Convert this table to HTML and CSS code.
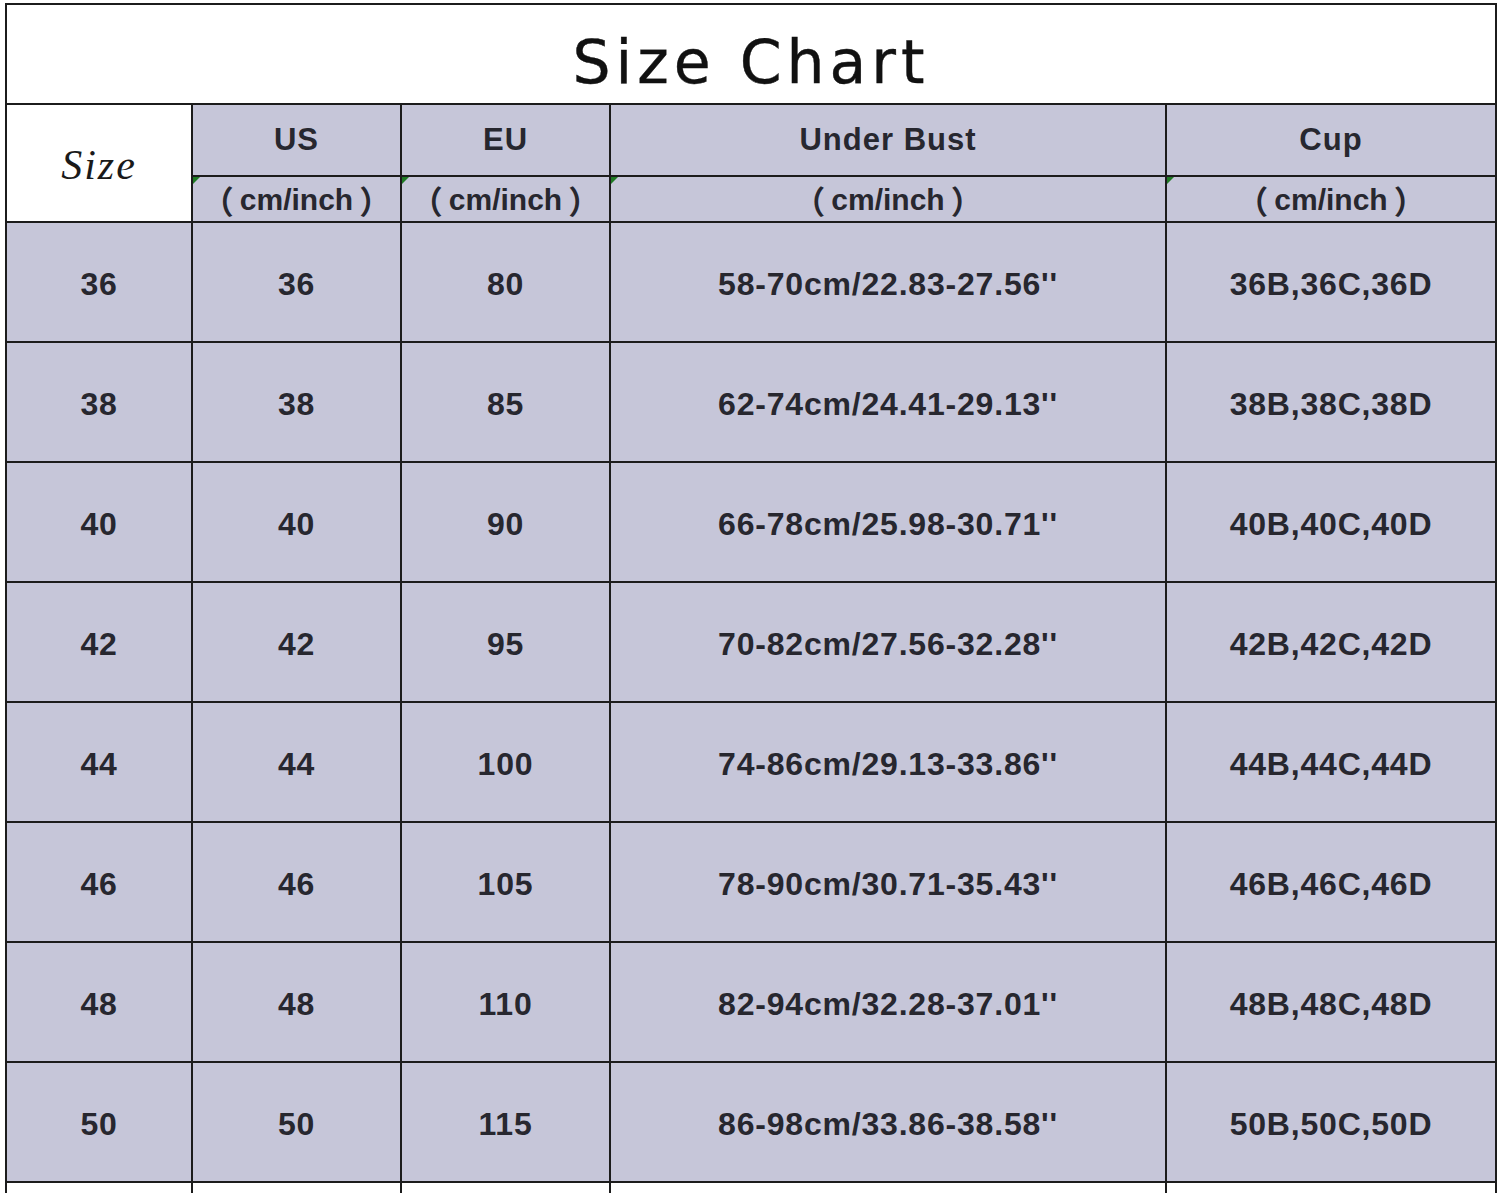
FILE: index.html
```html
<!DOCTYPE html>
<html>
<head>
<meta charset="utf-8">
<link rel="stylesheet" href="styles.css">
</head>
<body>
<div class="chart">
  <div class="title">Size Chart</div>
  <div class="grid">
    <div class="cell size-head">Size</div>
    <div class="cell head">US</div>
    <div class="cell head">EU</div>
    <div class="cell head">Under Bust</div>
    <div class="cell head">Cup</div>
    <div class="cell sub mark"><span class="lp">（</span>cm/inch<span class="rp">）</span></div>
    <div class="cell sub mark"><span class="lp">（</span>cm/inch<span class="rp">）</span></div>
    <div class="cell sub mark"><span class="lp">（</span>cm/inch<span class="rp">）</span></div>
    <div class="cell sub mark"><span class="lp">（</span>cm/inch<span class="rp">）</span></div>

    <div class="cell data">36</div><div class="cell data">36</div><div class="cell data">80</div><div class="cell data">58-70cm/22.83-27.56''</div><div class="cell data">36B,36C,36D</div>
    <div class="cell data">38</div><div class="cell data">38</div><div class="cell data">85</div><div class="cell data">62-74cm/24.41-29.13''</div><div class="cell data">38B,38C,38D</div>
    <div class="cell data">40</div><div class="cell data">40</div><div class="cell data">90</div><div class="cell data">66-78cm/25.98-30.71''</div><div class="cell data">40B,40C,40D</div>
    <div class="cell data">42</div><div class="cell data">42</div><div class="cell data">95</div><div class="cell data">70-82cm/27.56-32.28''</div><div class="cell data">42B,42C,42D</div>
    <div class="cell data">44</div><div class="cell data">44</div><div class="cell data">100</div><div class="cell data">74-86cm/29.13-33.86''</div><div class="cell data">44B,44C,44D</div>
    <div class="cell data">46</div><div class="cell data">46</div><div class="cell data">105</div><div class="cell data">78-90cm/30.71-35.43''</div><div class="cell data">46B,46C,46D</div>
    <div class="cell data">48</div><div class="cell data">48</div><div class="cell data">110</div><div class="cell data">82-94cm/32.28-37.01''</div><div class="cell data">48B,48C,48D</div>
    <div class="cell data">50</div><div class="cell data">50</div><div class="cell data">115</div><div class="cell data">86-98cm/33.86-38.58''</div><div class="cell data">50B,50C,50D</div>

    <div class="stub"></div><div class="stub"></div><div class="stub"></div><div class="stub"></div><div class="stub"></div>
  </div>
</div>
</body>
</html>
```
FILE: styles.css
```css
html, body {
  margin: 0;
  padding: 0;
  background: #ffffff;
}
body {
  padding: 3px 0 0 5px;
}
.chart {
  width: 1492px;
  box-sizing: border-box;
  border-left: 2px solid #1c1c1c;
  border-top: 2px solid #1c1c1c;
}
.title {
  height: 100px;
  box-sizing: border-box;
  border-right: 2px solid #1c1c1c;
  border-bottom: 2px solid #1c1c1c;
  display: flex;
  align-items: center;
  justify-content: center;
  padding-top: 16px;
  font-family: "DejaVu Sans", sans-serif;
  font-size: 60px;
  letter-spacing: 5px;
  color: #111111;
  -webkit-text-stroke: 0.4px #111111;
}
.grid {
  display: grid;
  grid-template-columns: 186px 209px 209px 556px 330px;
  grid-template-rows: 72px 46px repeat(8, 120px) 10px;
}
.cell {
  box-sizing: border-box;
  border-right: 2px solid #1c1c1c;
  border-bottom: 2px solid #1c1c1c;
  background: #c6c6d9;
  display: flex;
  align-items: center;
  justify-content: center;
  font-family: "Liberation Sans", "Noto Sans CJK TC", sans-serif;
  font-weight: bold;
  color: #27272f;
  position: relative;
}
.size-head {
  grid-row: 1 / span 2;
  background: #ffffff;
  font-family: "Liberation Serif", serif;
  font-style: italic;
  font-weight: normal;
  font-size: 42px;
  letter-spacing: 2px;
  color: #1a1a1a;
  padding-top: 4px;
}
.head {
  font-size: 31px;
  letter-spacing: 1px;
}
.sub {
  font-size: 30px;
  padding-top: 2px;
}
.lp, .rp {
  font-weight: bold;
  font-size: 32px;
}
.lp {
  margin-right: 6px;
}
.rp {
  margin-left: 6px;
}
.mark::before {
  content: "";
  position: absolute;
  left: 0;
  top: 0;
  border-top: 7px solid #1f7a24;
  border-right: 7px solid transparent;
}
.data {
  font-size: 32px;
  letter-spacing: 0.8px;
  padding-top: 4px;
}
.stub {
  border-right: 2px solid #1c1c1c;
}
```
